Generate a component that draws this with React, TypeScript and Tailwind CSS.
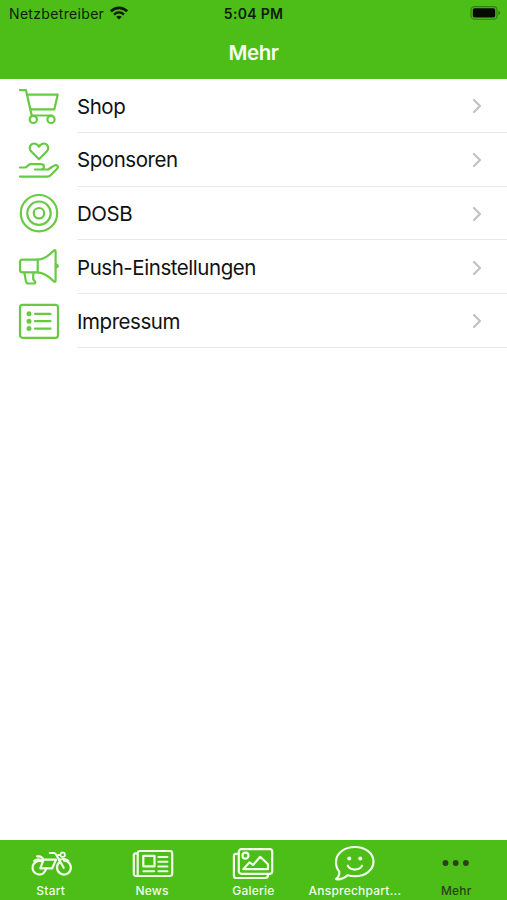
import React, { useState } from 'react';
import { ChevronRight } from 'lucide-react';

const menuItems = [
  { id: 'shop', name: 'Shop', icon: CartIcon },
  { id: 'sponsors', name: 'Sponsoren', icon: SponsorIcon },
  { id: 'dosb', name: 'DOSB', icon: TargetIcon },
  { id: 'push', name: 'Push-Einstellungen', icon: MegaphoneIcon },
  { id: 'imprint', name: 'Impressum', icon: ListIcon },
];

const tabs = [
  { id: 'start', name: 'Start', icon: BikeIcon },
  { id: 'news', name: 'News', icon: NewsIcon },
  { id: 'gallery', name: 'Galerie', icon: GalleryIcon },
  { id: 'contact', name: 'Ansprechpart...', icon: ChatIcon },
  { id: 'more', name: 'Mehr', icon: DotsIcon },
];

function MenuSvg({ children }: { children: React.ReactNode }) {
  return (
    <svg width="40" height="40" viewBox="0 0 40 40" fill="none" stroke="currentColor" strokeWidth="2.2" strokeLinecap="round" strokeLinejoin="round" className="shrink-0 overflow-visible text-[#66cb42]">
      {children}
    </svg>
  );
}

function TabSvg({ children }: { children: React.ReactNode }) {
  return (
    <svg width="44" height="36" viewBox="0 0 44 36" fill="none" stroke="currentColor" strokeWidth="2.2" strokeLinecap="round" strokeLinejoin="round" className="shrink-0 overflow-visible">
      {children}
    </svg>
  );
}

function CartIcon() {
  return (
    <MenuSvg>
      <path d="M1 4.2H7L12.7 29.5H33" />
      <path d="M8 8.7H38.7L35.3 23.4H11.4" />
      <circle cx="14.3" cy="33.4" r="3.6" />
      <circle cx="32" cy="33.4" r="3.6" />
    </MenuSvg>
  );
}

function SponsorIcon() {
  return (
    <MenuSvg>
      <path d="M20 19.3L12.3 11.5C8.8 7.5 12 3.5 15.2 3.5C17.5 3.5 19 5 20 6.7C21 5 22.5 3.5 24.8 3.5C28 3.5 31.2 7.5 27.7 11.5Z" />
      <path d="M1 27.5H6.2C8 27.5 8.7 24.1 12 24.1H22C26 24.1 26 29.5 22 29.5H16" />
      <path d="M23 29.5H28.5C30.5 29.5 34 25.3 36.6 25.1C39 24.9 39.6 27.3 38.3 28.5L32.2 34.7C31 36 30 36.6 28 36.6H1" />
    </MenuSvg>
  );
}

function TargetIcon() {
  return (
    <MenuSvg>
      <circle cx="20" cy="20.2" r="18.2" />
      <circle cx="20" cy="20.2" r="11.7" />
      <circle cx="20" cy="20.2" r="5.2" />
    </MenuSvg>
  );
}

function MegaphoneIcon() {
  return (
    <MenuSvg>
      <path d="M18.7 12.7H3.5C1.8 12.7 1 13.5 1 15.2V22.8C1 24.5 1.8 25.3 3.5 25.3H18.7Z" />
      <path d="M18.7 12.7C25 12.3 30 8.5 34.7 3.8C35.8 2.8 36.6 3.1 36.6 4.5V33.5C36.6 35 35.8 35.2 34.7 34.2C30 29.5 25 25.7 18.7 25.3" />
      <path d="M5.3 25.5L7 34.5C7.3 35.9 7.8 36.5 9.2 36.5H15.2C16.8 36.5 16.6 35.3 15.5 34.1C13 31.5 14.2 28.5 14.7 25.5" />
      <path d="M37.3 17C40 17.5 40 20.5 37.3 21Z" fill="currentColor" strokeWidth="1.2" />
    </MenuSvg>
  );
}

function ListIcon() {
  return (
    <MenuSvg>
      <rect x="1" y="3.8" width="38" height="33" rx="2.5" />
      <path d="M16 12.8H31.5M16 20.2H31.5M16 27.6H31.5" />
      <g fill="currentColor" stroke="none">
        <circle cx="10" cy="12.8" r="2.5" />
        <circle cx="10" cy="20.2" r="2.5" />
        <circle cx="10" cy="27.6" r="2.5" />
      </g>
    </MenuSvg>
  );
}

function BikeIcon() {
  return (
    <TabSvg>
      <path d="M17.1 23.2A6.8 6.8 0 1 1 12.6 16.3" />
      <path d="M30.9 17A6.9 6.9 0 1 0 35 15.7" />
      <path d="M8 11.3H10.5C12.5 11.3 13.2 12.4 14.6 14.6H27L23.3 23.3H11.3L14.6 14.6" />
      <path d="M20.8 8H24.8C26.2 8 26.8 8.8 27.4 10L34.7 22.8" />
      <path d="M5.2 15.8C7.5 14.2 11 14.2 13.4 15.8" />
      <path d="M29.2 10H31L32.5 7.6H34.5C36.3 7.6 36.3 11.8 34.5 11.8H32.5L31 10" strokeWidth="1.8" />
      <path d="M29.9 15.4C32.5 13.6 36.5 13.6 39.3 15.8" />
    </TabSvg>
  );
}

function NewsIcon() {
  return (
    <TabSvg>
      <path d="M7.7 30.8V8.5C7.7 6.8 8.5 6 10.2 6H40C41.5 6 42.2 6.8 42.2 8.3V28.5C42.2 30.2 41.5 31 39.8 31H6C4.5 31 3.8 30.2 3.8 28.5V10C3.8 8.8 4.5 8.2 7.5 8.2" />
      <rect x="13.3" y="10.8" width="11.2" height="10.5" />
      <path d="M28.3 12H37.5M28.3 16.8H37.5M28.3 21.5H37.5M28.3 26.2H37.5M13.3 26.2H24.3" strokeWidth="1.9" />
    </TabSvg>
  );
}

function GalleryIcon() {
  return (
    <TabSvg>
      <rect x="7.8" y="4.2" width="33.4" height="24.6" rx="2.5" />
      <path d="M7.5 8.8H5.2C3.7 8.8 2.9 9.6 2.9 11.1V30.7C2.9 32.2 3.7 33 5.2 33H34.5C36.2 33 37.2 31.8 37.2 29.2" />
      <circle cx="14.5" cy="10.7" r="3" />
      <path d="M12.3 24.2L18.5 17.3L22 20L29.2 11.8L37 19.3V24.2Z" />
    </TabSvg>
  );
}

function ChatIcon() {
  return (
    <TabSvg>
      <path d="M3 34.2C5.8 32 6.5 29.8 6.3 26.6C4.2 24.2 3 21 3 17.2C3 8.3 11.2 2 21.8 2C32.4 2 40.5 8.3 40.5 16.6C40.5 25 32.4 31.2 21.8 31.2C19.2 31.2 16.8 30.8 14.7 30.2C11.5 33 7.2 34.8 3 34.2Z" />
      <path d="M14.8 20.7C17.7 25.8 26 25.8 29 20.7" />
      <g fill="currentColor" stroke="none">
        <circle cx="16.3" cy="13.5" r="2" />
        <circle cx="27.3" cy="13.5" r="2" />
      </g>
    </TabSvg>
  );
}

function DotsIcon() {
  return (
    <TabSvg>
      <g fill="currentColor" stroke="none">
        <circle cx="11.5" cy="18" r="2.9" />
        <circle cx="21.7" cy="18" r="2.9" />
        <circle cx="31.9" cy="18" r="2.9" />
      </g>
    </TabSvg>
  );
}

function WifiIcon() {
  return (
    <svg width="18" height="14" viewBox="0 0 18 14" fill="none" stroke="currentColor" strokeWidth="2.6" className="-translate-y-px">
      <path d="M0.9 5.3C5.5 0.7 12.5 0.7 17.1 5.3" />
      <path d="M4 8.6C6.9 5.8 11.1 5.8 14 8.6" strokeWidth="2.4" />
      <path d="M9 13.5L6.2 10.7C7.8 9.3 10.2 9.3 11.8 10.7Z" fill="currentColor" stroke="none" />
    </svg>
  );
}

function BatteryIcon() {
  return (
    <svg width="31" height="14" viewBox="0 0 31 14" className="-translate-y-px">
      <rect x="1" y="0.6" width="26" height="12.6" rx="3.5" fill="none" stroke="#2f7f10" strokeWidth="1.1" />
      <rect x="2.8" y="2.3" width="22.4" height="9.2" rx="1.8" fill="#050a02" />
      <path d="M28.4 4.8C30.8 5.8 30.8 8 28.4 9Z" fill="#2f7f10" />
    </svg>
  );
}

export default function App() {
  const [activeTab, setActiveTab] = useState('more');

  return (
    <div className="flex h-[900px] w-[507px] flex-col overflow-hidden bg-white font-['Inter','Liberation_Sans',sans-serif]">
      {/* Status bar and title */}
      <header className="h-[79px] shrink-0 bg-[#4dbd18]">
        <div className="grid h-[27px] grid-cols-[1fr_auto_1fr] items-center px-[6px] text-[#0b1d05]">
          <div className="flex items-center gap-[6px] pl-[3px]">
            <span className="text-[14px] tracking-[0.33px]">Netzbetreiber</span>
            <WifiIcon />
          </div>
          <span className="text-[14px] font-semibold tracking-[0.3px]">5:04 PM</span>
          <div className="flex justify-end">
            <BatteryIcon />
          </div>
        </div>
        <h1 className="text-center text-[20.5px] leading-[51px] font-semibold tracking-[-0.4px] text-[#f7fff2]">Mehr</h1>
      </header>

      {/* Menu */}
      <main className="flex-1">
        {menuItems.map((item) => (
          <button key={item.id} className="flex h-[53.75px] w-full items-center pl-[19px] text-left">
            <item.icon />
            <span className="ml-[18px] flex h-full flex-1 items-center justify-between border-b border-[#e9e9e9] pt-[2px] pr-[18px]">
              <span className="pt-[1px] text-[20.5px] tracking-[-0.45px] text-[#111111]">{item.name}</span>
              <ChevronRight size={24} strokeWidth={2.3} className="text-[#c3c3c5]" />
            </span>
          </button>
        ))}
      </main>

      {/* Tab bar */}
      <nav className="grid h-[60px] shrink-0 grid-cols-5 bg-[#4dbd18]">
        {tabs.map((tab) => (
          <button
            key={tab.id}
            onClick={() => setActiveTab(tab.id)}
            className={`flex flex-col items-center pt-[5px] ${
              activeTab === tab.id ? 'text-[#29421d]' : 'text-[#efffe8]'
            }`}
          >
            <tab.icon />
            <span className="mt-[2px] text-[12px] leading-[16px] font-medium tracking-[0.22px] whitespace-nowrap">{tab.name}</span>
          </button>
        ))}
      </nav>
    </div>
  );
}
